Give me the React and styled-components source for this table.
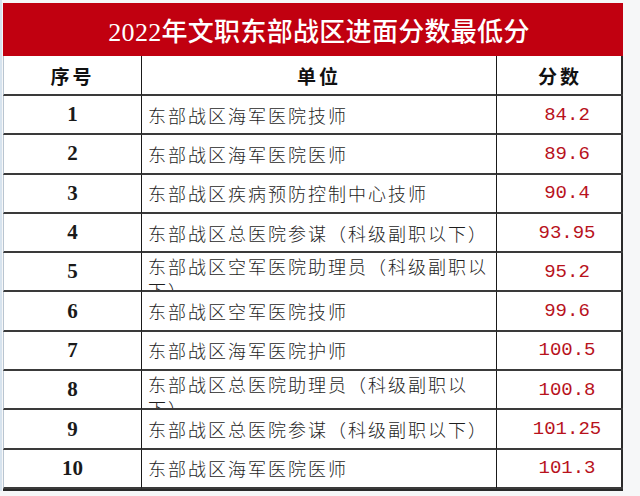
import React from "react";
import styled, { createGlobalStyle } from "styled-components";

const Global = createGlobalStyle`
  html, body { margin: 0; padding: 0; }
  body {
    background: #f6f7f8;
    width: 640px;
    height: 496px;
    overflow: hidden;
    font-family: "Noto Sans CJK SC", "Liberation Serif", serif;
  }
`;

const Sheet = styled.div`
  padding: 3px 0 0 3px;
  background: linear-gradient(to right, #d7e3ee 0, #d7e3ee 2px, transparent 2px);
`;

const Table = styled.div`
  display: grid;
  width: 620px;
  grid-template-columns: 139px 355px 126px;
  grid-template-rows: 53px 40px repeat(10, 39.3px);
  background: #ffffff;
  border-right: 2px solid #2a2a2a;
  border-bottom: 2px solid #2a2a2a;
  box-sizing: border-box;
`;

const Title = styled.div`
  grid-column: 1 / -1;
  background: #c10010;
  color: #ffffff;
  display: flex;
  align-items: center;
  justify-content: center;
  padding-left: 12px;
  font-family: "Liberation Serif", "Noto Sans CJK SC", serif;
  font-size: 26px;
  font-weight: 500;
  letter-spacing: 0.3px;
`;

const Cell = styled.div`
  display: flex;
  align-items: ${(p) => (p.$top ? "flex-start" : "center")};
  justify-content: ${(p) => (p.$left ? "flex-start" : "center")};
  padding-left: ${(p) => (p.$left ? "6px" : p.$score ? "14px" : "0")};
  overflow: hidden;
  box-sizing: border-box;
  border-bottom: 2px solid #3a3a3a;
  border-right: ${(p) => (p.$last ? "none" : "1.5px solid #1a1a1a")};
  border-left: ${(p) => (p.$first ? "1px solid #b8c4d0" : "none")};
`;

const HeadText = styled.span`
  font-family: "Noto Sans CJK SC", serif;
  font-weight: 700;
  font-size: 19px;
  color: #111;
  letter-spacing: 3px;
`;

const Num = styled.span`
  font-family: "Liberation Serif", serif;
  font-weight: 700;
  font-size: 21px;
  color: #1a1a1a;
`;

const Unit = styled.span`
  font-family: "Noto Sans CJK SC", sans-serif;
  font-weight: 300;
  font-size: 18px;
  letter-spacing: 2px;
  line-height: 24px;
  color: #1e1e1e;
  padding-top: ${(p) => (p.$top ? "1px" : "0")};
`;

const Score = styled.span`
  font-family: "Liberation Mono", monospace;
  font-size: 19px;
  color: #b8121c;
`;

const rows = [
  ["1", "东部战区海军医院技师", "84.2"],
  ["2", "东部战区海军医院医师", "89.6"],
  ["3", "东部战区疾病预防控制中心技师", "90.4"],
  ["4", "东部战区总医院参谋（科级副职以下）", "93.95"],
  ["5", "东部战区空军医院助理员（科级副职以下）", "95.2", true],
  ["6", "东部战区空军医院技师", "99.6"],
  ["7", "东部战区海军医院护师", "100.5"],
  ["8", "东部战区总医院助理员（科级副职以下）", "100.8", true],
  ["9", "东部战区总医院参谋（科级副职以下）", "101.25"],
  ["10", "东部战区海军医院医师", "101.3"],
];

export default function App() {
  return (
    <>
      <Global />
      <Sheet>
        <Table>
          <Title>2022年文职东部战区进面分数最低分</Title>
          <Cell $first>
            <HeadText>序号</HeadText>
          </Cell>
          <Cell>
            <HeadText>单位</HeadText>
          </Cell>
          <Cell $last>
            <HeadText>分数</HeadText>
          </Cell>
          {rows.map(([n, unit, score, wrap]) => (
            <React.Fragment key={n}>
              <Cell $first>
                <Num>{n}</Num>
              </Cell>
              <Cell $left $top={wrap}>
                <Unit $top={wrap}>{unit}</Unit>
              </Cell>
              <Cell $last $score>
                <Score>{score}</Score>
              </Cell>
            </React.Fragment>
          ))}
        </Table>
      </Sheet>
    </>
  );
}
